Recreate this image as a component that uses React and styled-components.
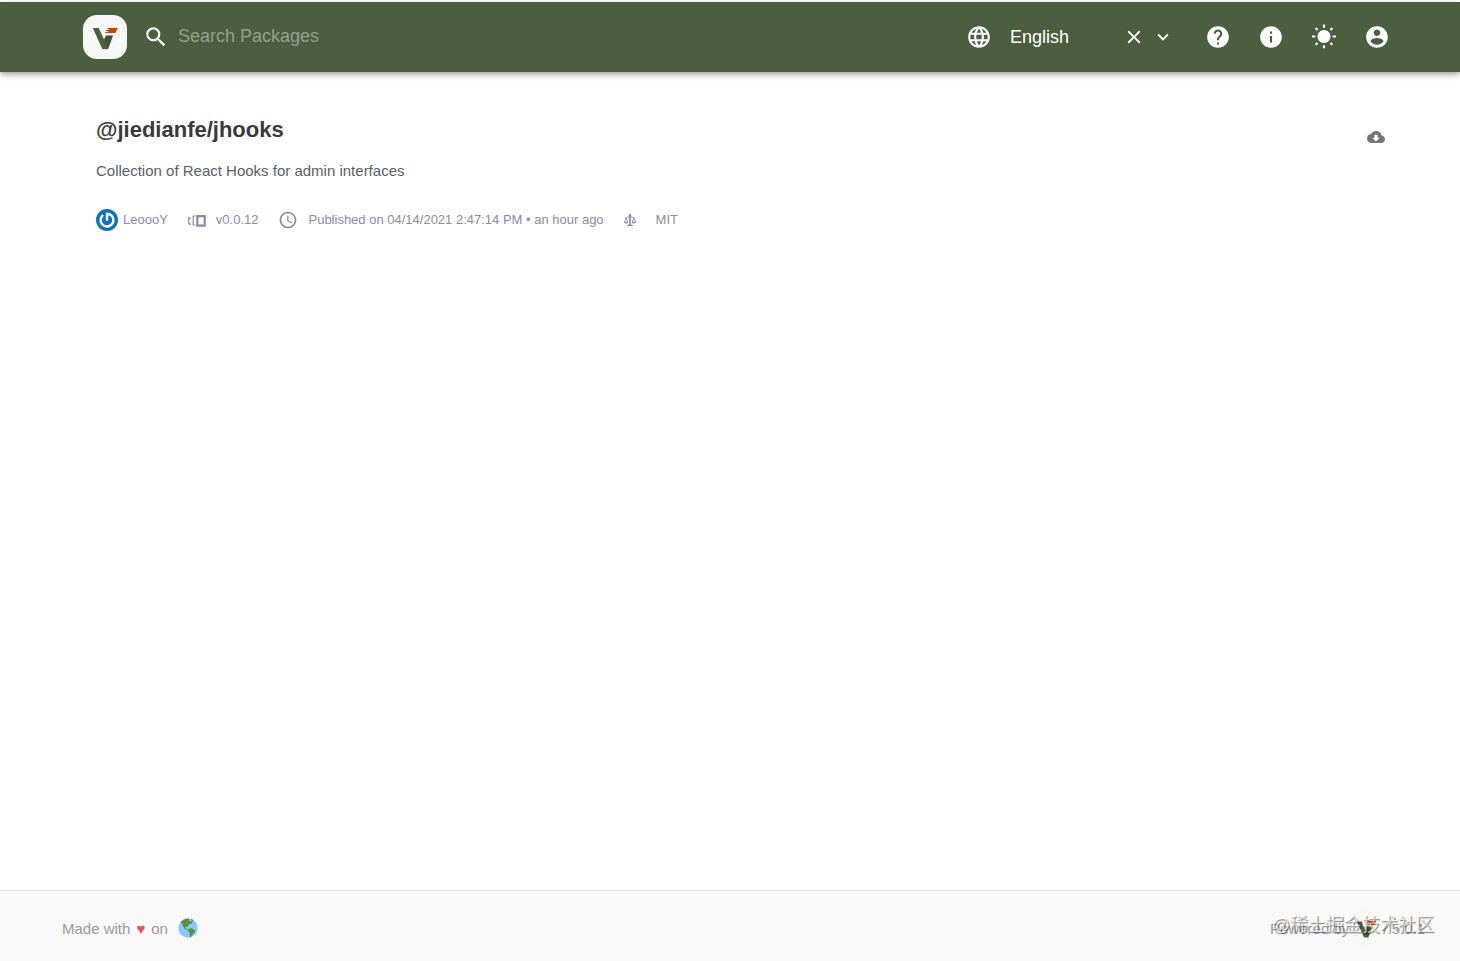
import React, { useState } from 'react';

import styled, { createGlobalStyle } from 'styled-components';

import {
  MdClose,
  MdCloudDownload,
  MdExpandMore,
  MdHelp,
  MdInfo,
  MdLanguage,
  MdSchedule,
  MdSearch,
  MdWbSunny,
} from 'react-icons/md';

const GlobalStyle = createGlobalStyle`
  * {
    box-sizing: border-box;
  }

  body {
    margin: 0;
    background: #fff;
    font-family: 'Liberation Sans', Arial, 'Noto Sans CJK SC', sans-serif;
  }

  svg {
    display: block;
    flex: none;
  }
`;

const Page = styled.div`
  display: flex;
  flex-direction: column;
  min-height: 100vh;
  padding-top: 2px;
`;

const Header = styled.header`
  display: flex;
  align-items: center;
  justify-content: space-between;
  min-height: 70px;
  padding: 0 57px 0 83px;
  background: #4b5e40;
  color: #fff;
  box-shadow: 0 2px 4px -1px rgba(0, 0, 0, 0.2), 0 4px 5px rgba(0, 0, 0, 0.14),
    0 1px 10px rgba(0, 0, 0, 0.12);
`;

const HeaderGroup = styled.div`
  display: flex;
  align-items: center;
`;

const HomeLink = styled.a`
  display: block;
  margin-right: 16px;
`;

const SearchLabel = styled.label`
  display: flex;
  align-items: center;
  gap: 9px;
`;

const SearchInput = styled.input`
  width: 320px;
  padding: 0 0 2px;
  border: 0;
  outline: 0;
  background: transparent;
  color: #fff;
  font: 18px 'Liberation Sans', Arial, sans-serif;

  &::placeholder {
    color: #93a08c;
    opacity: 1;
  }
`;

const LanguageLabel = styled.label`
  display: flex;
  align-items: center;
  gap: 18px;
`;

const LanguageSelect = styled.select`
  appearance: none;
  width: 110px;
  padding: 0;
  border: 0;
  outline: 0;
  background: transparent;
  color: #fff;
  font: 18px 'Liberation Sans', Arial, sans-serif;

  option {
    color: #3a3a3a;
  }
`;

const IconButton = styled.button`
  display: flex;
  align-items: center;
  justify-content: center;
  width: ${props => props.$width}px;
  height: 48px;
  padding: 0;
  border: 0;
  background: transparent;
  color: inherit;
  cursor: pointer;
`;

const Actions = styled.div`
  display: flex;
  margin-left: 13px;
`;

const Main = styled.main`
  display: flex;
  flex: 1;
  justify-content: space-between;
  align-items: flex-start;
  padding: 44px 70px 44px 96px;
`;

const Title = styled.h1`
  margin: 0;
  color: #3a3a3a;
  font-size: 22px;
  line-height: 28px;
`;

const Description = styled.p`
  margin: 16px 0 0;
  color: #586069;
  font-size: 15px;
  line-height: 22px;
`;

const Meta = styled.div`
  display: flex;
  flex-wrap: wrap;
  align-items: center;
  gap: 20px;
  margin-top: 26px;
  color: #8c8aa5;
  font-size: 13px;
  line-height: 24px;
`;

const MetaItem = styled.div`
  display: flex;
  align-items: center;
  gap: ${props => props.$gap || 10}px;
`;

const MetaIcon = styled.span`
  width: 22px;
`;

const DownloadLink = styled.a`
  display: flex;
  padding: 12px 5px;
  color: #757575;
`;

const Footer = styled.footer`
  position: relative;
  display: flex;
  align-items: center;
  justify-content: space-between;
  min-height: 71px;
  padding: 4px 35px 0 62px;
  border-top: 1px solid #e3e3e3;
  background: #f9f9f9;
  color: #999;
  font-size: 15px;
`;

const FooterGroup = styled.div`
  display: flex;
  align-items: center;
  gap: ${props => props.$gap}px;
`;

const Heart = styled.span`
  color: #e25555;
`;

const Watermark = styled.div`
  position: absolute;
  right: 26px;
  bottom: 22px;
  color: rgba(255, 255, 255, 0.6);
  font-family: 'Liberation Sans', 'Noto Sans CJK SC', sans-serif;
  font-size: 18px;
  line-height: 28px;
  text-shadow: 1px 1px 1px rgba(0, 0, 0, 0.5);
  white-space: nowrap;
  pointer-events: none;
`;

const Logo = ({ size, background }) => (
  <svg width={size} height={size} viewBox="0 0 44 44" aria-hidden="true">
    <rect width="44" height="44" rx="14" fill={background} />
    <path d="M19 35h6.500l5.500-12z" fill="#000" opacity=".07" />
    <path d="M21 24.600l2-4.200h7.100L25 34h-3z" fill="#405236" />
    <path d="M9.800 13h5.900l5.500 11.800L25 34h-5.700z" fill="#4b5e40" />
    <path
      d="M24.600 13h10.200l-2.400 4.900H22l.4-1h2.700l.3-.9h-2.700l.5-1.100h2.600l.3-.8h-1.900z"
      fill="#cd4000"
    />
  </svg>
);

const Avatar = () => (
  <svg width="22" height="22" viewBox="0 0 22 22" aria-hidden="true">
    <circle cx="11" cy="11" r="11" fill="#0b74b5" />
    <path
      d="M11 10.800V4.700a6.400 6.400 0 1 1-4.700 2.100"
      fill="none"
      stroke="#fff"
      strokeWidth="2.5"
      strokeLinecap="round"
      strokeLinejoin="round"
    />
  </svg>
);

const VersionIcon = () => (
  <svg width="18" height="13" viewBox="0 0 18 13" aria-hidden="true">
    <path
      d="M.8 3v6.500q0 .7.8.7H3M0 4.500h3M7.300 2H5.200v9h2.100"
      fill="none"
      stroke="currentColor"
      strokeWidth="1.2"
    />
    <path
      d="M9.300 2.200h7.400v9.400H9.300z"
      fill="none"
      stroke="currentColor"
      strokeWidth="2.200"
    />
  </svg>
);

const LawIcon = () => (
  <svg width="12" height="14" viewBox="0 0 14 16" aria-hidden="true">
    <path
      fill="currentColor"
      fillRule="evenodd"
      d="M7 4c-.83 0-1.5-.67-1.5-1.5S6.17 1 7 1s1.5.67 1.5 1.5S7.83 4 7 4zm7 6c0 1.11-.89 2-2 2h-1c-1.11 0-2-.89-2-2l2-4h-1c-.55 0-1-.45-1-1H8v8c.42 0 1 .45 1 1h1c.42 0 1 .45 1 1H3c0-.55.58-1 1-1h1c0-.55.58-1 1-1h.03L6 5H5c0 .55-.45 1-1 1H3l2 4c0 1.11-.89 2-2 2H2c-1.11 0-2-.89-2-2l2-4H1V5h3c0-.55.45-1 1-1h4c.55 0 1 .45 1 1h3v1h-1l2 4zM2.5 7L1 10h3L2.5 7zM13 10l-1.5-3-1.5 3h3z"
    />
  </svg>
);

const AccountIcon = () => (
  <svg width="26" height="26" viewBox="0 0 24 24" aria-hidden="true">
    <path
      fill="currentColor"
      d="M12 2C6.480 2 2 6.480 2 12s4.480 10 10 10 10-4.480 10-10S17.520 2 12 2zm0 3c1.660 0 3 1.340 3 3s-1.340 3-3 3-3-1.340-3-3 1.340-3 3-3zm0 14.200c-2.500 0-4.710-1.280-6-3.220.030-1.990 4-3.080 6-3.080 1.990 0 5.970 1.090 6 3.080-1.290 1.940-3.500 3.220-6 3.220z"
    />
  </svg>
);

const Earth = () => (
  <svg width="20" height="20" viewBox="0 0 20 20" aria-hidden="true">
    <circle cx="10" cy="10" r="9.700" fill="#88c9f9" />
    <path
      d="M2.400 4.300Q5 1 9.700.4l2 .8-.8 1.300 1.200 1 1.200-.3 1.500 1.600-1.600.9-1.800.3-1.200 1.800-.6 1-1.800-.2-.6 1 1 1.200 1.800.6.5 1.100-1.600-.5-2.400-1.200L5 8.300 4.400 6z"
      fill="#5c913b"
    />
    <path
      d="M13 .8l2.200 1.200-.6 1.400-1.500-.9zM10.200 11.400l2-1.400 2.200.5.8 1.100 2 .8-.6 2.200-1.500 1-1 1.900-1.700 1.700-.9-.8.5-3.200-1.600-1.800z"
      fill="#5c913b"
    />
  </svg>
);

const App = () => {
  const [search, setSearch] = useState('');
  const [language, setLanguage] = useState('en');

  return (
    <Page>
      <GlobalStyle />
      <Header>
        <HeaderGroup>
          <HomeLink href="#home" aria-label="Home">
            <Logo size={44} background="#f7f8f6" />
          </HomeLink>
          <SearchLabel>
            <MdSearch size={26} />
            <SearchInput
              type="text"
              aria-label="Search Packages"
              placeholder="Search Packages"
              value={search}
              onChange={e => setSearch(e.target.value)}
            />
          </SearchLabel>
        </HeaderGroup>
        <HeaderGroup>
          <LanguageLabel>
            <MdLanguage size={26} />
            <LanguageSelect
              aria-label="Language"
              value={language}
              onChange={e => setLanguage(e.target.value)}
            >
              <option value="">Select</option>
              <option value="en">English</option>
            </LanguageSelect>
          </LanguageLabel>
          <IconButton
            type="button"
            $width={28}
            aria-label="Clear language"
            onClick={() => setLanguage('')}
          >
            <MdClose size={22} />
          </IconButton>
          <IconButton type="button" $width={30} aria-label="Open languages">
            <MdExpandMore size={22} />
          </IconButton>
          <Actions>
            <IconButton type="button" $width={53} aria-label="Help">
              <MdHelp size={26} />
            </IconButton>
            <IconButton type="button" $width={53} aria-label="Information">
              <MdInfo size={26} />
            </IconButton>
            <IconButton type="button" $width={53} aria-label="Switch theme">
              <MdWbSunny size={26} />
            </IconButton>
            <IconButton type="button" $width={53} aria-label="Account">
              <AccountIcon />
            </IconButton>
          </Actions>
        </HeaderGroup>
      </Header>

      <Main>
        <div>
          <Title>@jiedianfe/jhooks</Title>
          <Description>Collection of React Hooks for admin interfaces</Description>
          <Meta>
            <MetaItem $gap={5}>
              <Avatar />
              <span>LeoooY</span>
            </MetaItem>
            <MetaItem>
              <VersionIcon />
              <span>v0.0.12</span>
            </MetaItem>
            <MetaItem>
              <MdSchedule size={20} />
              <span>Published on 04/14/2021 2:47:14 PM • an hour ago</span>
            </MetaItem>
            <MetaItem>
              <MetaIcon>
                <LawIcon />
              </MetaIcon>
              <span>MIT</span>
            </MetaItem>
          </Meta>
        </div>
        <DownloadLink href="#download" aria-label="Download tarball">
          <MdCloudDownload size={18} />
        </DownloadLink>
      </Main>

      <Footer>
        <FooterGroup $gap={10}>
          <FooterGroup $gap={6}>
            <span>Made with</span>
            <Heart>♥</Heart>
            <span>on</span>
          </FooterGroup>
          <Earth />
        </FooterGroup>
        <FooterGroup $gap={0}>
          <span>Powered by</span>
          <Logo size={34} background="#f7f8f6" />
          <span>/ 5.0.1</span>
        </FooterGroup>
        <Watermark>@稀土掘金技术社区</Watermark>
      </Footer>
    </Page>
  );
};

export default App;
